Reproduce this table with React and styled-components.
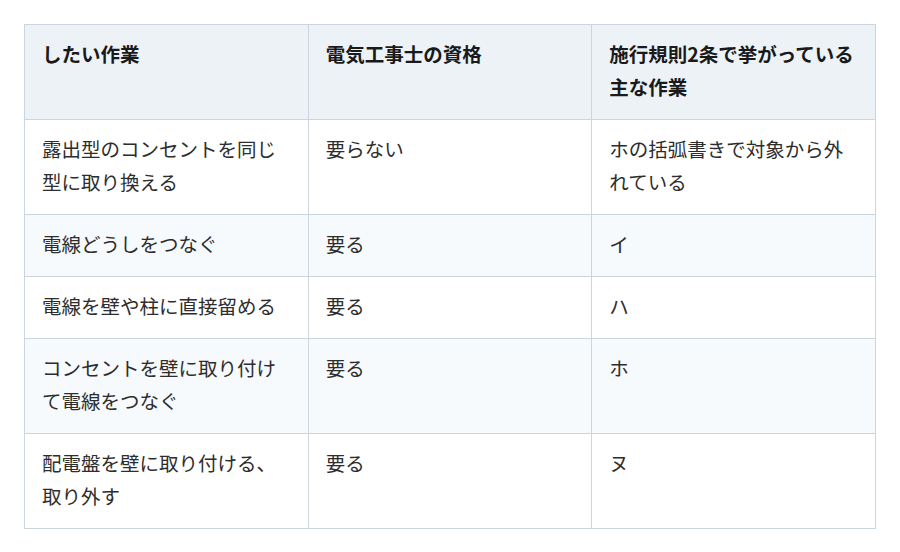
import React from 'react';
import styled, { createGlobalStyle } from 'styled-components';

const GlobalStyle = createGlobalStyle`
  body {
    margin: 0;
    background: #ffffff;
    font-family: "Noto Sans CJK JP", "Noto Sans", sans-serif;
  }
`;

const Page = styled.div`
  padding: 24px;
`;

const Table = styled.table`
  width: 100%;
  border-collapse: collapse;
  table-layout: fixed;
  font-size: 19.5px;
  line-height: 33px;
  color: #2d2d2d;
`;

const HeadCell = styled.th`
  background: #edf2f7;
  border: 1px solid #cbd5e0;
  padding: 12px 17px 16px;
  text-align: left;
  vertical-align: top;
  font-weight: 700;
  color: #1a1a1a;
`;

const Row = styled.tr`
  background: ${(p) => (p.$striped ? '#f7fafc' : '#ffffff')};
`;

const Cell = styled.td`
  border: 1px solid #cbd5e0;
  padding: 12px 17px 16px;
  vertical-align: top;
`;

const rows = [
  ['露出型のコンセントを同じ型に取り換える', '要らない', 'ホの括弧書きで対象から外れている'],
  ['電線どうしをつなぐ', '要る', 'イ'],
  ['電線を壁や柱に直接留める', '要る', 'ハ'],
  ['コンセントを壁に取り付けて電線をつなぐ', '要る', 'ホ'],
  ['配電盤を壁に取り付ける、取り外す', '要る', 'ヌ'],
];

const App = () => (
  <Page>
    <GlobalStyle />
    <Table>
      <thead>
        <tr>
          <HeadCell>したい作業</HeadCell>
          <HeadCell>電気工事士の資格</HeadCell>
          <HeadCell>施行規則2条で挙がっている主な作業</HeadCell>
        </tr>
      </thead>
      <tbody>
        {rows.map((r, i) => (
          <Row key={i} $striped={i % 2 === 1}>
            {r.map((c, j) => (
              <Cell key={j}>{c}</Cell>
            ))}
          </Row>
        ))}
      </tbody>
    </Table>
  </Page>
);

export default App;
